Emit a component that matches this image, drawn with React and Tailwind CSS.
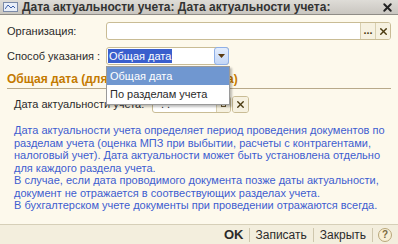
import { X } from 'lucide-react'

const PARAGRAPH = [
  'Дата актуальности учета определяет период проведения документов по',
  'разделам учета (оценка МПЗ при выбытии, расчеты с контрагентами,',
  'налоговый учет). Дата актуальности может быть установлена отдельно',
  'для каждого раздела учета.',
  'В случае, если дата проводимого документа позже даты актуальности,',
  'документ не отражается в соотвествующих разделах учета.',
  'В бухгалтерском учете документы при проведении отражаются всегда.',
]

function ClearBtn({ className = '' }) {
  return (
    <div className={`w-[15px] flex items-center justify-center bg-[#f6f1e0] ${className}`}>
      <X className="w-[11px] h-[11px] text-[#4a3a10]" strokeWidth={3} />
    </div>
  )
}

export default function App() {
  return (
    <div
      className="w-[398px] h-[244px] flex flex-col bg-[#fdf9ec] text-[#2b2b2b] overflow-hidden relative"
      style={{ fontFamily: '"Liberation Sans", Arial, sans-serif' }}
    >
      {/* title bar */}
      <div className="h-[15px] flex items-center bg-gradient-to-b from-[#dedcd7] to-[#c9c6c0] border-b border-[#8f8c86] pl-[3px] pr-[4px]">
        <div className="w-[15px] h-[10px] border border-[#7b8aa8] bg-[#e8eef8] flex items-center justify-center">
          <svg width="11" height="6" viewBox="0 0 11 6">
            <path d="M0 5 L3 1 L6 4 L8 2 L10 4" stroke="#3c5fa8" strokeWidth="1" fill="none" />
          </svg>
        </div>
        <div className="ml-[4px] text-[12px] font-bold text-[#333] leading-none whitespace-nowrap">
          Дата актуальности учета: Дата актуальности учета:
        </div>
        <div className="flex-1" />
        <X className="w-[13px] h-[13px] text-[#222]" strokeWidth={3.5} />
      </div>

      {/* form */}
      <div className="flex flex-col px-[7px] pt-[7px] text-[11px]">
        <div className="flex items-center h-[18px]">
          <div className="w-[99px]">Организация:</div>
          <div className="flex-1 flex h-[18px] border border-[#c9bc95] rounded-[3px] overflow-hidden bg-white">
            <div className="flex-1" />
            <div className="w-[15px] border-l border-[#d8cfb0] bg-[#f6f1e0] flex items-end justify-center pb-[3px] text-[11px] font-bold leading-none text-[#4a3a10]">
              ...
            </div>
            <ClearBtn className="border-l border-[#d8cfb0]" />
          </div>
        </div>

        <div className="flex items-center h-[18px] mt-[7px]">
          <div className="w-[99px] whitespace-nowrap">Способ указания :</div>
          <div className="w-[123px] flex h-[18px] border border-[#c9bc95] rounded-[3px] bg-white">
            <div className="flex-1 flex items-center pl-[1px]">
              <span className="bg-[#3a5fcd] text-white text-[11px] leading-[14px] px-[1px]">Общая дата</span>
            </div>
            <div className="w-[15px] -my-[1px] -mr-[1px] rounded-[3px] border border-[#8fb0e8] bg-gradient-to-b from-[#e4edfc] to-[#c3d6f6] flex items-center justify-center">
              <svg width="7" height="4" viewBox="0 0 7 4">
                <path d="M0 0 L7 0 L3.5 4 Z" fill="#5a3a10" />
              </svg>
            </div>
          </div>
        </div>

        <div className="mt-[7px] text-[12px] font-bold text-[#c47a00] leading-[14px] border-b border-[#b8a98a] pb-[2px] whitespace-nowrap">
          Общая дата (для всех разделов учета)
        </div>

        <div className="flex items-center h-[18px] mt-[6px] pl-[7px]">
          <div className="w-[138px] whitespace-nowrap">Дата актуальности учета:</div>
          <div className="w-[79px] flex h-[17px] border border-[#c9bc95] rounded-[3px] bg-white overflow-hidden">
            <div className="flex-1 text-[11px] pl-[8px] leading-[15px]"> .  .    </div>
            <div className="w-[14px] border-l border-[#d8cfb0] bg-[#f6f1e0] flex items-center justify-center">
              <div className="w-[5px] h-[5px] border border-[#6b5a30]" />
            </div>
          </div>
          <div className="ml-[1px] flex h-[17px] border border-[#c9bc95] rounded-[3px] overflow-hidden">
            <ClearBtn />
          </div>
        </div>

        <div className="mt-[11px] pl-[7px] text-[11px] leading-[12.5px] text-[#3d5dd0] whitespace-nowrap">
          {PARAGRAPH.map(l => (
            <div key={l}>{l}</div>
          ))}
        </div>
      </div>

      <div className="flex-1" />

      {/* bottom bar */}
      <div className="h-[20px] border-t border-[#d6cfb8] bg-[#f3eedd] flex items-center justify-end pr-[6px] text-[12px]">
        <div className="font-bold text-[13px] px-[5px]">OK</div>
        <div className="w-px h-[14px] bg-[#cfc7ad]" />
        <div className="px-[6px]">Записать</div>
        <div className="w-px h-[14px] bg-[#cfc7ad]" />
        <div className="px-[6px]">Закрыть</div>
        <div className="w-px h-[14px] bg-[#cfc7ad]" />
        <div className="ml-[5px] w-[14px] h-[14px] rounded-full border border-[#b9a77a] bg-[#f7efd5] flex items-center justify-center text-[10px] font-bold text-[#7a6a40] leading-none">
          ?
        </div>
      </div>

      {/* open dropdown list */}
      <div className="absolute left-[106px] top-[66px] w-[124px] bg-white border border-[#9a9a9a] shadow-[2px_2px_2px_rgba(0,0,0,0.25)] text-[11px]">
        <div className="h-[18px] bg-[#7097d0] text-white pl-[3px] leading-[18px]">Общая дата</div>
        <div className="h-[19px] pl-[3px] leading-[19px]">По разделам учета</div>
      </div>
    </div>
  )
}
